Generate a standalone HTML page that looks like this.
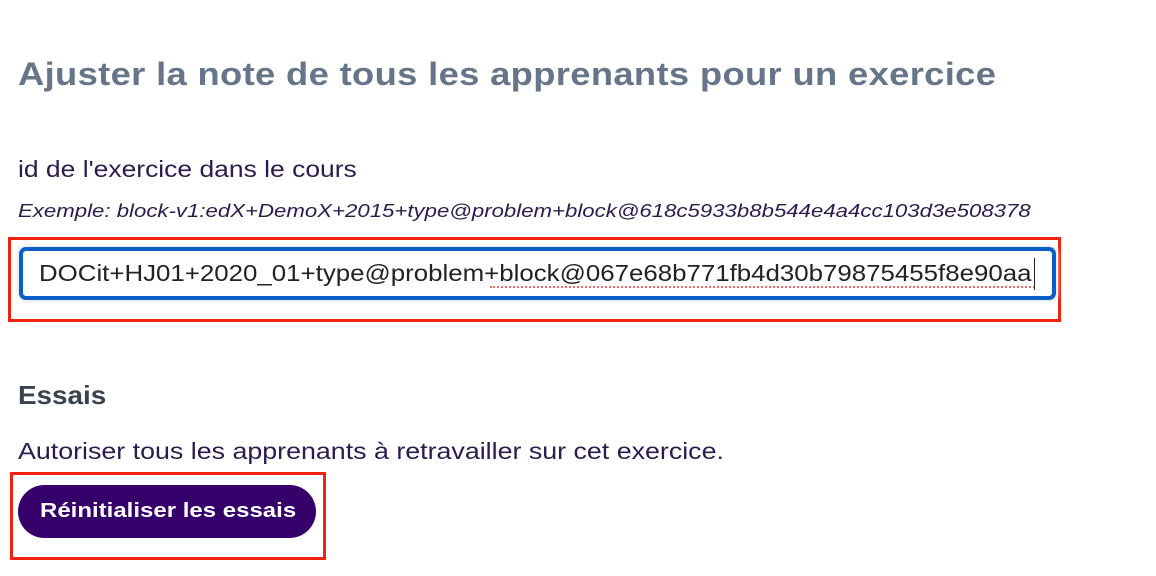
<!DOCTYPE html>
<html><head><meta charset="utf-8"><style>
body{margin:0;width:1156px;height:576px;background:#fff;font-family:"Liberation Sans",sans-serif;position:relative;overflow:hidden}
.a{position:absolute;white-space:nowrap;transform-origin:0 0}
h1{position:absolute;left:18px;top:56px;margin:0;font-size:32px;font-weight:bold;color:#66758a;letter-spacing:0.3px;white-space:nowrap;transform-origin:0 0;transform:scaleX(1.136)}
.lbl{left:18px;top:156px;font-size:23px;color:#2b1b4f;transform:scaleX(1.15)}
.ex{left:18px;top:200px;font-size:18.5px;font-style:italic;color:#2b1b4f;transform:scaleX(1.2)}
.red1{left:8px;top:237px;width:1047px;height:79px;border:3px solid #f0230e}
.inp{left:19px;top:247px;width:1029px;height:45px;border:4px solid #0a5fc6;border-radius:7px;overflow:hidden;box-shadow:0 0 3px 2px #e6ecf7}
.inp span{position:absolute;left:16px;top:9px;font-size:23.5px;color:#222;white-space:nowrap;transform-origin:0 0;transform:scaleX(1.1)}
.squig{left:490px;top:286px;width:545px;height:0;border-top:2px dotted #f06a6a}
.cur{left:1034px;top:258px;width:1px;height:32px;background:#222}
.es{left:18px;top:380px;font-size:26px;font-weight:bold;color:#3a4250;transform:scaleX(1.07)}
.au{left:18px;top:438px;font-size:23px;color:#2b1b4f;transform:scaleX(1.165)}
.red2{left:10px;top:472px;width:310px;height:82px;border:3px solid #f0230e}
.btn{left:18px;top:485px;width:298px;height:53px;border-radius:27px;background:#36006b}
.btn span{position:absolute;left:22px;top:15px;color:#fff;font-weight:bold;font-size:20px;white-space:nowrap;transform-origin:0 0;transform:scaleX(1.2)}
</style></head><body>
<h1>Ajuster la note de tous les apprenants pour un exercice</h1>
<div class="a lbl">id de l'exercice dans le cours</div>
<div class="a ex">Exemple: block-v1:edX+DemoX+2015+type@problem+block@618c5933b8b544e4a4cc103d3e508378</div>
<div class="a red1"></div>
<div class="a inp"><span>DOCit+HJ01+2020_01+type@problem+block@067e68b771fb4d30b79875455f8e90aa</span></div>
<div class="a squig"></div>
<div class="a cur"></div>
<div class="a es">Essais</div>
<div class="a au">Autoriser tous les apprenants à retravailler sur cet exercice.</div>
<div class="a red2"></div>
<div class="a btn"><span>Réinitialiser les essais</span></div>
</body></html>
